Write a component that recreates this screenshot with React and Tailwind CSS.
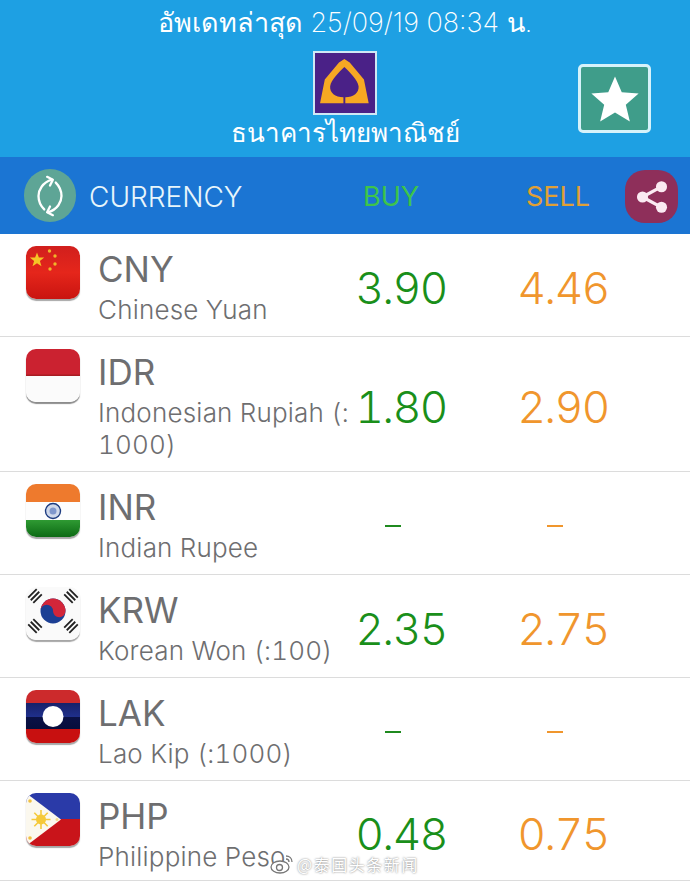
import React from 'react';

const FONT = "font-['Inter','Noto_Sans','DejaVu_Sans',sans-serif]";

const FlagFrame = ({ children, shadow = 'shadow-[0_2px_1px_rgba(0,0,0,0.35)]' }) => (
  <div className={`relative w-[54px] h-[53px] rounded-[10px] overflow-hidden shrink-0 ${shadow}`}>
    <svg viewBox="0 0 54 53" className="absolute inset-0 w-full h-full">
      {children}
    </svg>
  </div>
);

const FlagCN = () => (
  <FlagFrame>
    <defs>
      <linearGradient id="cn" x1="0" y1="0" x2="0" y2="1">
        <stop offset="0" stopColor="#d11f1d" />
        <stop offset="0.5" stopColor="#e5261b" />
        <stop offset="1" stopColor="#c91410" />
      </linearGradient>
    </defs>
    <rect width="54" height="53" fill="url(#cn)" />
    <polygon points="11,6.5 12.9,11.6 18.2,11.6 13.9,15 15.5,20.2 11,17.2 6.5,20.2 8.1,15 3.8,11.6 9.1,11.6" fill="#f5c526" />
    <circle cx="23.5" cy="5" r="1.7" fill="#f0b52a" />
    <circle cx="29" cy="10" r="1.7" fill="#f0b52a" />
    <circle cx="29" cy="18" r="1.7" fill="#f0b52a" />
    <circle cx="24" cy="23" r="1.7" fill="#f0b52a" />
  </FlagFrame>
);

const FlagID = () => (
  <FlagFrame shadow="shadow-[0_2px_1px_rgba(0,0,0,0.45)]">
    <rect width="54" height="27" fill="#cb2230" />
    <rect y="26" width="54" height="27" fill="#fbfbfb" />
    <rect y="25.5" width="54" height="1.5" fill="#a81c22" />
  </FlagFrame>
);

const FlagIN = () => (
  <FlagFrame>
    <defs>
      <linearGradient id="ing" x1="0" y1="0" x2="0" y2="1">
        <stop offset="0" stopColor="#2f9a33" />
        <stop offset="1" stopColor="#0c6a14" />
      </linearGradient>
    </defs>
    <rect width="54" height="18" fill="#ee7a2d" />
    <rect y="18" width="54" height="18" fill="#fdfdfd" />
    <rect y="36" width="54" height="17" fill="url(#ing)" />
    <circle cx="27" cy="27" r="7.5" fill="#cfd8ea" stroke="#1d3c80" strokeWidth="1.4" />
    <circle cx="27" cy="27" r="3.5" fill="#7f97cc" />
  </FlagFrame>
);

const Trigram = ({ x, y, a }) => (
  <g transform={`translate(${x} ${y}) rotate(${a})`} stroke="#222222" strokeWidth="1.8">
    <path d="M-6 -3.6 H6 M-6 0 H6 M-6 3.6 H6" />
  </g>
);

const FlagKR = () => (
  <FlagFrame>
    <rect width="54" height="53" fill="#fafafa" />
    <circle cx="27" cy="24" r="12.5" fill="#1c3f94" />
    <path d="M14.5 24 A12.5 12.5 0 0 1 39.5 24 A6.25 6.25 0 0 1 27 24 A6.25 6.25 0 0 0 14.5 24 Z" fill="#d3263a" />
    <Trigram x={9} y={9} a={-45} />
    <Trigram x={45} y={9} a={45} />
    <Trigram x={9} y={39} a={45} />
    <Trigram x={45} y={39} a={-45} />
  </FlagFrame>
);

const FlagLA = () => (
  <FlagFrame>
    <defs>
      <linearGradient id="lab" x1="0" y1="0" x2="0" y2="1">
        <stop offset="0" stopColor="#17216a" />
        <stop offset="0.5" stopColor="#1f2f8a" />
        <stop offset="0.52" stopColor="#0a1146" />
        <stop offset="1" stopColor="#070d3a" />
      </linearGradient>
    </defs>
    <rect width="54" height="14" fill="#cc2a2c" />
    <rect y="13" width="54" height="27" fill="url(#lab)" />
    <rect y="39" width="54" height="14" fill="#c81010" />
    <circle cx="27" cy="26.5" r="10.5" fill="#ffffff" />
  </FlagFrame>
);

const FlagPH = () => (
  <FlagFrame>
    <rect width="54" height="27" fill="#2a3aa8" />
    <rect y="26" width="54" height="27" fill="#c9141a" />
    <polygon points="0,0 35,26.5 0,53" fill="#fbf8ee" />
    <circle cx="15" cy="26.5" r="5" fill="#f5c93a" />
    <g stroke="#f5c93a" strokeWidth="1.6">
      <path d="M15 17 V36 M5.5 26.5 H24.5 M8.3 19.8 L21.7 33.2 M21.7 19.8 L8.3 33.2" />
    </g>
    <circle cx="4" cy="8" r="1.8" fill="#f0c040" />
    <circle cx="4" cy="45" r="1.8" fill="#f0c040" />
    <circle cx="31" cy="26.5" r="1.5" fill="#f3dc90" />
  </FlagFrame>
);

const rows = [
  { code: 'CNY', name: 'Chinese Yuan', buy: '3.90', sell: '4.46', Flag: FlagCN, h: 'h-[103px]' },
  { code: 'IDR', name: 'Indonesian Rupiah (:1000)', buy: '1.80', sell: '2.90', Flag: FlagID, h: 'h-[135px]' },
  { code: 'INR', name: 'Indian Rupee', buy: '-', sell: '-', Flag: FlagIN, h: 'h-[103px]' },
  { code: 'KRW', name: 'Korean Won (:100)', buy: '2.35', sell: '2.75', Flag: FlagKR, h: 'h-[103px]' },
  { code: 'LAK', name: 'Lao Kip (:1000)', buy: '-', sell: '-', Flag: FlagLA, h: 'h-[103px]' },
  { code: 'PHP', name: 'Philippine Peso', buy: '0.48', sell: '0.75', Flag: FlagPH, h: 'h-[100px]' },
];

const Rate = ({ value, color }) =>
  value === '-' ? (
    <div className={`w-4 h-[2px] ${color === 'buy' ? 'bg-[#1f8a1f]' : 'bg-[#f0962d]'} -translate-x-[8px]`} />
  ) : (
    <span className={`text-[44px] leading-none font-light tabular-nums tracking-[-1.5px] ${color === 'buy' ? 'text-[#1a8f1a]' : 'text-[#f0962d]'}`}>{value}</span>
  );

const Row = ({ code, name, buy, sell, Flag, h }) => (
  <div className={`flex ${h} border-b border-[#dcdcdc] pl-[26px] overflow-hidden`}>
    <div className="pt-3">
      <Flag />
    </div>
    <div className="w-[271px] pl-[18px] pt-[12px] shrink-0">
      <div className="text-[35px] leading-[46px] text-[#6e6e70]">{code}</div>
      <div className="mt-[2px] text-[26px] leading-[32px] font-light tabular-nums tracking-[0.2px] text-[#6e6e70] break-all">{name}</div>
    </div>
    <div className="w-[100px] flex items-center justify-center pt-[6px]">
      <Rate value={buy} color="buy" />
    </div>
    <div className="w-[228px] flex items-center justify-center pt-[6px] pr-[2px]">
      <div className="w-[100px] ml-[-2px] flex justify-center"><Rate value={sell} color="sell" /></div>
    </div>
  </div>
);

export default function App() {
  return (
    <div className={`relative w-[690px] h-[881px] overflow-hidden bg-white ${FONT}`}>
      <header className="h-[157px] bg-[#1ea0e3] relative flex flex-col items-center text-white pt-[6px]">
        <div className="text-[27px] leading-[34px] font-extralight">อัพเดทล่าสุด 25/09/19 08:34 น.</div>
        <div className="mt-[11px] w-[64px] h-[64px] border-2 border-[#cfe8f5] bg-[#4a2187] flex items-center justify-center">
          <svg viewBox="0 0 190 190" className="w-[60px] h-[60px]">
            <path
              d="M93 19 L110 30 L155 84 L170 159 L96 159 L96 140 C122 140 140 125 138 105 C135 85 110 60 93 44 C76 60 51 85 48 105 C46 125 64 140 90 140 L90 159 L16 159 L31 84 L76 30 Z"
              fill="#f7a823"
            />
          </svg>
        </div>
        <div className="text-[26px] leading-[34px] mt-[1px] font-extralight">ธนาคารไทยพาณิชย์</div>
        <button className="absolute left-[578px] top-[64px] w-[73px] h-[69px] rounded-[5px] border-[3px] border-[#d6f2fa] bg-[#3f9d8a] flex items-center justify-center">
          <svg viewBox="0 0 24 24" className="w-[54px] h-[54px]" fill="#ffffff">
            <path d="M12 2 L15 9 L22.5 9.6 L16.8 14.5 L18.6 22 L12 18 L5.4 22 L7.2 14.5 L1.5 9.6 L9 9 Z" />
          </svg>
        </button>
      </header>

      <div className="h-[77px] bg-[#1b75d3] flex items-center relative">
        <div className="ml-[24px] w-[52px] h-[53px] rounded-full bg-[#5ea596] flex items-center justify-center shrink-0">
          <svg viewBox="0 0 24 24" className="w-[46px] h-[46px]" fill="none" stroke="#ffffff" strokeWidth="1.2" strokeLinecap="round" strokeLinejoin="round">
            <path d="M13 3.5 C8 5 6 9 6 12 C6 15 7.5 17.5 9 19" />
            <path d="M10.5 2 L13.5 3.5 L12 6.5" />
            <path d="M11 20.5 C16 19 18 15 18 12 C18 9 16.5 6.5 15 5" />
            <path d="M13.5 22 L10.5 20.5 L12 17.5" />
          </svg>
        </div>
        <div className="ml-[13px] w-[274px] pt-[3px] text-[28px] font-light text-[#e8f6fb] shrink-0">CURRENCY</div>
        <div className="w-[163px] pt-[3px] text-[27px] font-normal text-[#3ec44a] shrink-0">BUY</div>
        <div className="w-[98px] pt-[3px] text-[27px] font-normal text-[#e0a035] shrink-0">SELL</div>
        <div className="absolute left-[625px] top-[13px] w-[53px] h-[53px] rounded-[20px] bg-[#8e2f5a] flex items-center justify-center">
          <svg viewBox="0 0 24 24" className="w-[38px] h-[38px]" fill="#fbeaf2">
            <circle cx="18" cy="5.5" r="3.5" />
            <circle cx="6" cy="12" r="3.5" />
            <circle cx="18" cy="18.5" r="3.5" />
            <path d="M6 12 L18 5.5 M6 12 L18 18.5" stroke="#fbeaf2" strokeWidth="2" />
          </svg>
        </div>
      </div>

      <div>
        {rows.map((r) => (
          <Row key={r.code} {...r} />
        ))}
      </div>

      <div className="absolute left-[270px] top-[853px] flex items-center gap-[3px] font-['Noto_Sans_CJK_SC',sans-serif] text-[16px] leading-[22px] text-white [text-shadow:0_0_2px_rgba(90,90,90,0.9)]">
        <svg viewBox="0 0 24 20" className="w-[24px] h-[20px]" fill="none" stroke="#777" strokeWidth="1.3">
          <ellipse cx="10" cy="13" rx="9" ry="6" fill="#ffffff" />
          <circle cx="9.5" cy="13.5" r="3" />
          <path d="M16 2 C19 2 22 4 22 8 M16 5 C18 5 19 6 19 8" />
        </svg>
        <span className="tracking-[1.5px]">@泰国头条新闻</span>
      </div>
    </div>
  );
}
